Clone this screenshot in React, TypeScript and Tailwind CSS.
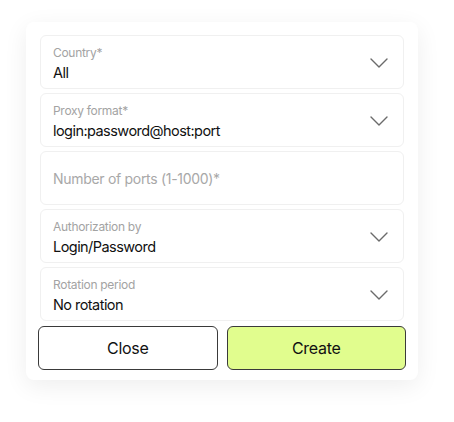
import React from "react";

interface FieldProps {
    label: string;
    value?: string;
    select?: boolean;
}

const Chevron = () => (
    <svg width="18" height="10" viewBox="0 0 18 10" fill="none" className="shrink-0 mt-[2px]">
        <path d="M1 1L9 9L17 1" stroke="#6b6b6b" strokeWidth="1.4" strokeLinecap="round" strokeLinejoin="round" />
    </svg>
);

const Field: React.FC<FieldProps> = ({ label, value, select = true }: FieldProps) => {
    return (
        <div className="h-[54px] rounded-[6px] border border-[#f0f0f0] bg-white flex items-center pl-[12px] pr-[15px]">
            {value !== undefined ? (
                <div className="flex-1 flex flex-col pt-[3px]">
                    <span className="text-[12px] leading-[16px] tracking-[-0.3px] text-[#a3a3a3]">{label}</span>
                    <span className="text-[14.5px] leading-[20px] tracking-[-0.55px] text-[#111111] mt-[2px]">{value}</span>
                </div>
            ) : (
                <span className="flex-1 text-[14px] tracking-[-0.3px] text-[#a8a8a8] pt-[1px]">{label}</span>
            )}
            {select && <Chevron />}
        </div>
    );
};

export default function App() {
    return (
        <div className="w-[454px] h-[422px] bg-white pt-[22px] pl-[26px]" style={{ fontFamily: "Inter, 'Noto Sans', sans-serif" }}>
            <div className="w-[392px] h-[358px] bg-white rounded-[8px] shadow-[0_6px_24px_rgba(0,0,0,0.07)] px-[13px] pt-[13px]">
                <div className="flex flex-col gap-[4px] px-[1px]">
                    <Field label="Country*" value="All" />
                    <Field label="Proxy format*" value="login:password@host:port" />
                    <Field label="Number of ports (1-1000)*" select={false} />
                    <Field label="Authorization by" value="Login/Password" />
                    <Field label="Rotation period" value="No rotation" />
                </div>
                <div className="grid grid-cols-2 gap-[9px] mt-[5px] -mx-[1px]">
                    <button className="h-[44px] rounded-[6px] border border-[#3a3a3a] bg-white text-[16px] tracking-[-0.3px] text-[#111111]">Close</button>
                    <button className="h-[44px] rounded-[6px] border border-[#3a3a3a] bg-[#e1fd8e] text-[16px] tracking-[-0.3px] text-[#111111]">Create</button>
                </div>
            </div>
        </div>
    );
}
